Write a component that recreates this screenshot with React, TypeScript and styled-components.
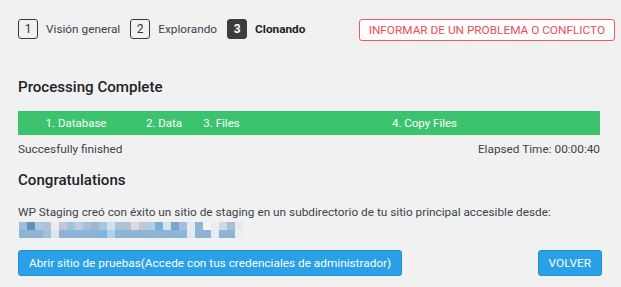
import React from "react";
import styled, { createGlobalStyle } from "styled-components";

const Global = createGlobalStyle`
  html, body { margin: 0; padding: 0; background: #f1f1f1; }
  body { font-family: Roboto, "Noto Sans", sans-serif; color: #3c434a; font-size: 11.8px; }
`;

const Page = styled.div`
  padding: 19px 21px 0 18px;
  display: flex;
  flex-direction: column;
`;

const TopBar = styled.div`
  display: flex;
  align-items: flex-start;
  height: 22px;
`;

const Steps = styled.div`
  display: flex;
  align-items: center;
  flex: 1;
  height: 20px;
`;

const StepNum = styled.span<{ $active?: boolean }>`
  box-sizing: border-box;
  width: 20px;
  height: 20px;
  border: 1px solid #3c3c3c;
  background: ${(p) => (p.$active ? "#3c3c3c" : "transparent")};
  color: ${(p) => (p.$active ? "#fff" : "#333")};
  border-radius: 3px;
  display: flex;
  align-items: center;
  justify-content: center;
  font-size: 12px;
  font-weight: ${(p) => (p.$active ? 700 : 400)};
  margin-right: 8px;
`;

const StepLabel = styled.span<{ $active?: boolean }>`
  font-size: 11.8px;
  font-weight: ${(p) => (p.$active ? 700 : 400)};
  color: ${(p) => (p.$active ? "#1d2327" : "#3c434a")};
  margin-right: 10px;
`;

const ReportButton = styled.button`
  box-sizing: border-box;
  height: 22px;
  padding: 0 9px;
  border: 1px solid #f05a5a;
  border-radius: 3px;
  background: #fff;
  color: #ee4c55;
  font-family: inherit;
  font-size: 11.8px;
  text-transform: uppercase;
  margin-right: -15px;
`;

const Heading = styled.h2<{ $gap: number }>`
  margin: ${(p) => p.$gap}px 0 0;
  font-size: 15.1px;
  font-weight: 500;
  color: #1d2327;
  line-height: 20px;
`;

const ProgressBar = styled.div`
  display: flex;
  height: 24px;
  background: #3bc36e;
  margin-top: 14px;
`;

const Segment = styled.div<{ $w?: number }>`
  ${(p) => (p.$w ? `width: ${p.$w}px;` : "flex: 1;")}
  display: flex;
  align-items: center;
  justify-content: center;
  color: #fff;
  font-size: 11.5px;
`;

const StatusRow = styled.div`
  display: flex;
  justify-content: space-between;
  margin-top: 5px;
  line-height: 18px;
`;

const Text = styled.p`
  margin: 13px 0 0;
  line-height: 18px;
`;

const Pixelated = styled.div`
  display: grid;
  grid-template-columns: repeat(28, 8px);
  grid-auto-rows: 8px;
  margin-top: 1px;
  margin-left: 1px;
`;

const Pixel = styled.span<{ $c: string }>`
  background: ${(p) => p.$c};
`;

const Actions = styled.div`
  display: flex;
  justify-content: space-between;
  align-items: center;
  margin-top: 12px;
  margin-right: -2px;
`;

const BlueButton = styled.button`
  box-sizing: border-box;
  height: 26px;
  padding: 0 10px;
  border: 1px solid #1e8fd8;
  border-radius: 3px;
  background: #29a0e8;
  color: #fff;
  font-family: inherit;
  font-size: 11.8px;
`;

const row1 = [
  "#9dbfdc", "#6590c2", "#a9cbe3", "#b3bed8", "#ececec", "#c4c5dc", "#9cc3e0", "#bbcfe0",
  "#a4c0db", "#98b8d6", "#abc4e0", "#d0e2ec", "#a9c3dc", "#b3c0d8", "#e2d9de", "#c0c8dc",
  "#b3cce3", "#7aaedc", "#d3e3e8", "#78a3d3", "#a4bedc", "#e8eaf0", "#8fb5d7", "#f4f4f4",
  "#ececec", "#c8dbe6", "#a9bcd8", "#e8e8e8",
];
const row2 = [
  "#8db3d5", "#8db3d5", "#8db3d5", "#a4c0db", "#dbe6ee", "#8db3d5", "#8db3d5", "#8db3d5",
  "#8db3d5", "#8db3d5", "#82b5dd", "#b0d0e3", "#8db3d5", "#8db3d5", "#8db3d5", "#8db3d5",
  "#8db3d5", "#8db3d5", "#8db3d5", "#8db3d5", "#8db3d5", "#e4e8ef", "#8db3d5", "#8db3d5",
  "#e8ecf1", "#8db3d5", "#8db3d5", "#eeeeee",
];

export default function App() {
  return (
    <>
      <Global />
      <Page>
        <TopBar>
          <Steps>
            <StepNum>1</StepNum>
            <StepLabel>Visión general</StepLabel>
            <StepNum>2</StepNum>
            <StepLabel>Explorando</StepLabel>
            <StepNum $active>3</StepNum>
            <StepLabel $active>Clonando</StepLabel>
          </Steps>
          <ReportButton>Informar de un problema o conflicto</ReportButton>
        </TopBar>
        <Heading $gap={36}>Processing Complete</Heading>
        <ProgressBar>
          <Segment $w={116}>1. Database</Segment>
          <Segment $w={60}>2. Data</Segment>
          <Segment $w={55}>3. Files</Segment>
          <Segment>4. Copy Files</Segment>
        </ProgressBar>
        <StatusRow>
          <span>Succesfully finished</span>
          <span>Elapsed Time: 00:00:40</span>
        </StatusRow>
        <Heading $gap={12}>Congratulations</Heading>
        <Text>
          WP Staging creó con éxito un sitio de staging en un subdirectorio de tu sitio principal accesible desde:
        </Text>
        <Pixelated>
          {row1.map((c, i) => (
            <Pixel key={"a" + i} $c={c} />
          ))}
          {row2.map((c, i) => (
            <Pixel key={"b" + i} $c={c} />
          ))}
        </Pixelated>
        <Actions>
          <BlueButton>Abrir sitio de pruebas(Accede con tus credenciales de administrador)</BlueButton>
          <BlueButton>VOLVER</BlueButton>
        </Actions>
      </Page>
    </>
  );
}
